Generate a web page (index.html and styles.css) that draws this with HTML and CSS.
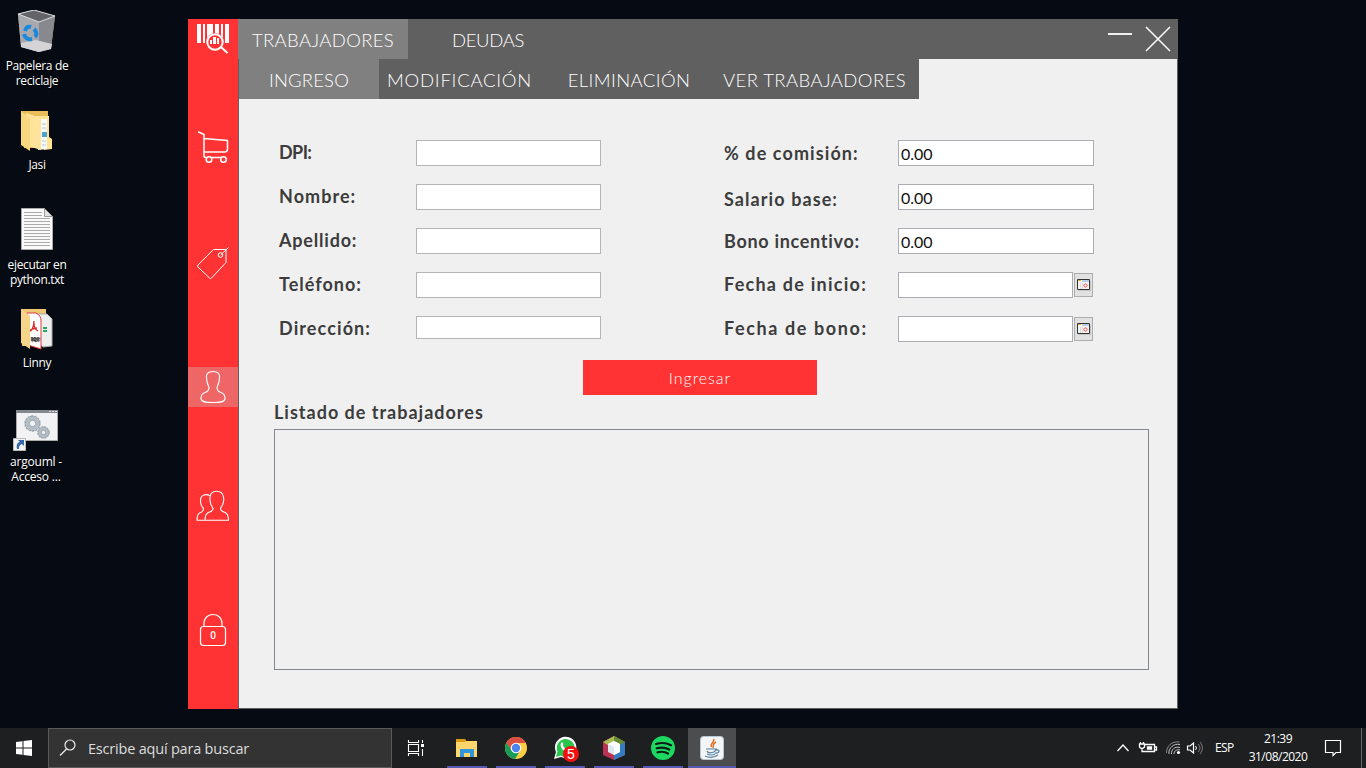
FILE: index.html
```
<!DOCTYPE html>
<html lang="es">
<head>
<meta charset="utf-8">
<title>Trabajadores</title>
<link rel="stylesheet" href="styles.css">
</head>
<body>
<div class="desktop">
<aside class="shortcuts">
  <div class="shortcut">
    <svg width="48" height="48" viewBox="0 0 48 48"><path d="M6 4 22 0 43 6 39 39 27 42 9 37Z" fill="#9a9ba1"/><path d="M6 4 27 12 27 42 9 37Z" fill="#a8a9ae"/><path d="M27 12 43 6 39 38 27 42Z" fill="#87898f"/><path d="M9 33 24 30 40 34 39 39 27 42 9 37Z" fill="#d4d4d6"/><path d="M6 4 22 0 43 6 27 12Z" fill="#626469" stroke="#dededf"/><g fill="none" stroke="#1689dc" stroke-width="4"><path d="M13 21c1-4 3-5 6-4"/><path d="M22 19c3 3 3 6 1 8"/><path d="M20 29c-4 1-7-1-8-5"/></g></svg>
    <span>Papelera de<br>reciclaje</span>
  </div>
  <div class="shortcut folder">
    <svg width="48" height="48" viewBox="0 1 48 48"><path d="M9 1h27v37H12Z" fill="#e9bd59"/><path d="M24 6h13v21l3 2v10l-8 1Z" fill="#ffe292"/><path d="M28 9h7v30l-9 1Z" fill="#f7f9fa"/><path d="M30 14h4M30 18h4M30 31h4M30 35h4" stroke="#b4c4ce"/><path d="M30 22h5v5h-5z" fill="#49a4d4"/><path d="M14 3 29 8v32l-13-4Z" fill="#ffe39a"/><path d="M9 1 18 8v33L9 35Z" fill="#f8d77e"/></svg>
    <span>Jasi</span>
  </div>
  <div class="shortcut file">
    <svg width="48" height="48" viewBox="0 0 48 48"><path d="M9.500.5h23l8 8v33h-31Z" fill="#fafafa" stroke="#aaa"/><path d="M32.500.5v8h8Z" fill="#e2e2e2" stroke="#999"/><path d="M12 4.500h18M12 7.500h18M12 10.500h26M12 13.500h26M12 16.500h26M12 19.500h26M12 22.500h26M12 25.500h26M12 28.500h26M12 31.500h26M12 34.500h26M12 37.500h26" stroke="#aaa"/></svg>
    <span>ejecutar en<br>python.txt</span>
  </div>
  <div class="shortcut linny">
    <svg width="48" height="48" viewBox="0 1 48 48"><path d="M9 1h25v37H10Z" fill="#efc876"/><path d="M25 6h10l5 5v27l-9 1-6-5Z" fill="#eee" stroke="#aaa"/><path d="M31 20h4M31 23h4" stroke="#28a765" stroke-width="2"/><path d="M15 5h9q5 2 5 8v28l-13-4Z" fill="#fff" stroke="#e53c3c"/><path d="M22 13c0 7-3 10-4 10s2-3 7-3M22 15c0 5 2 7 4 8" fill="none" stroke="#dd2b2b" stroke-width="1.300"/><text x="18.500" y="33" class="pdf">PDF</text><path d="M9 1 18 8v33l-9-6Z" fill="#f6d489"/></svg>
    <span>Linny</span>
  </div>
  <div class="shortcut argo">
    <svg width="48" height="48" viewBox="0 0 48 48"><path d="M3.500 2.500h41v30h-41Z" fill="#f2f2f4" stroke="#aaa"/><path d="M3 2h42v3H3Z" fill="#83878e"/><path d="M36 3.500h2M39 3.500h2M42 3.500h2" stroke="#ddd"/><g fill="none" stroke="#b5bdc4"><circle cx="19.500" cy="15.500" r="5" stroke-width="3.500"/><circle cx="19.500" cy="15.500" r="7.500" stroke-width="1.800" stroke-dasharray="2 1.370"/><circle cx="30.500" cy="24.500" r="3.700" stroke-width="3"/><circle cx="30.500" cy="24.500" r="5.700" stroke-width="1.500" stroke-dasharray="1.700 1.290"/></g><g fill="none" stroke="#81909c" stroke-width=".7"><circle cx="19.500" cy="15.500" r="3.200"/><circle cx="19.500" cy="15.500" r="7.300"/><circle cx="30.500" cy="24.500" r="2.200"/><circle cx="30.500" cy="24.500" r="5.500"/></g><path d="M.5 30.500h12v12H.5Z" fill="#f2f2f2" stroke="#bbb"/><path d="M4 41c-1-5 1-7 3-7l-2-2h6v6l-2-2c-3 1-3 3-3 5Z" fill="#3567ad"/></svg>
    <span>argouml -<br>Acceso ...</span>
  </div>
</aside>

<main class="window">
  <nav class="sidebar">
    <svg class="side-item" width="50" height="40" viewBox="0 0 50 40"><path d="M9 5h4v19H9zM15 5h2v19h-2zM19 5h6v19h-6zM27 5h4v19h-4zM33 5h2v19h-2zM37 5h4v19h-4z" fill="#fff"/><circle cx="27" cy="23" r="9" fill="#f33"/><path d="M22 21h2v4h-2zM25 18h3v7h-3zM29 19h2v6h-2z" fill="#fff"/><circle cx="27" cy="23" r="7.700" fill="none" stroke="#fff" stroke-width="2"/><path d="m33 28 6.500 6" stroke="#fff" stroke-width="2"/></svg>
    <svg class="side-item cart" width="50" height="40" viewBox="0 0 50 40"><path d="m10.500 4 5.500 2.500v21.500q0 1.500 2 1.500h18M16 10.500l23.500 2v8.500q0 3-3 3H16" fill="none" stroke="#fff" stroke-width="1.500" stroke-linecap="round" stroke-linejoin="round"/><circle cx="21" cy="31.500" r="2.800" fill="#f33" stroke="#fff" stroke-width="1.600"/><circle cx="35.500" cy="31.500" r="2.800" fill="#f33" stroke="#fff" stroke-width="1.600"/></svg>
    <svg class="side-item tag" width="50" height="40" viewBox="0 0 50 40"><g fill="none" stroke="#fff"><path d="M25.500 5.500h12.500v13L23.500 34q-1 1-2 0L10 23q-1-1 0-2Z"/><circle cx="32.500" cy="11" r="2.300"/><path d="m32.500 11 8-7.500"/></g></svg>
    <svg class="side-item user active" width="50" height="40" viewBox="0 0 50 40"><path d="M25 4.500c-5 0-7 2.500-6.500 6 0 4 1 7 2.500 10 0 3-1 4-4 5-3 1-4 3-4 6 0 3 3 4 12 4s12-1 12-4-1-5-4-6c-3-1-4-2-4-5 1.500-3 2.500-6 2.500-10 .5-3.500-1.500-6-6.500-6Z" fill="none" stroke="#fff" stroke-width="1.100"/></svg>
    <svg class="side-item group" width="50" height="40" viewBox="0 0 50 40"><g fill="none" stroke="#fff" stroke-width="1.100"><path d="M22 9.500c-5-2-9.500-.5-9.500 5 0 3 1 6 3 8 0 3-1 3-3 4-3 1-3.500 4-3.500 7.800H40.500c0-5-1-7-4-8-3-1-4-2-4-4 3-4 4-7 3-11-.5-4-3-6-7-6s-6 2-6.500 6c-.5 4 0 7 3 11 0 2-1 3-4 4-3 1-4 3-4 8"/></g></svg>
    <svg class="side-item lock" width="50" height="40" viewBox="0 0 50 40"><g fill="none" stroke="#fff"><path d="M16 15.500v-3c0-12 18-12 18 0v3" stroke-width="1.200"/><rect x="12.500" y="15.500" width="25" height="19" rx="3" stroke-width="1.200"/></g><text x="25" y="28" class="lock-number">0</text></svg>
  </nav>
  <section class="content">
    <header class="titlebar">
      <div class="tab main-tab selected"><span class="t1">TRABAJADORES</span></div>
      <div class="tab deudas"><span class="t2">DEUDAS</span></div>
      <svg class="controls" width="80" height="40" viewBox="0 0 80 40"><path d="M10 15h24" stroke="#f0f0f0" stroke-width="2"/><path d="m48 8 24 24M72 8 48 32" stroke="#fff" stroke-width="1.500"/></svg>
    </header>
    <div class="panel">
      <nav class="subtabs">
        <div class="tab ingreso selected"><span class="t3">INGRESO</span></div>
        <div class="tab modificacion"><span class="t4">MODIFICACIÓN</span></div>
        <div class="tab eliminacion"><span class="t5">ELIMINACIÓN</span></div>
        <div class="tab ver"><span class="t6">VER TRABAJADORES</span></div>
      </nav>
      <form class="form">
        <div class="column left">
          <label><span class="l1">DPI:</span><input></label>
          <label><span class="l2">Nombre:</span><input></label>
          <label><span class="l3">Apellido:</span><input></label>
          <label><span class="l4">Teléfono:</span><input></label>
          <label><span class="l5">Dirección:</span><input class="short"></label>
        </div>
        <div class="column right">
          <label><span class="r1">% de comisión:</span><input value="0.00"></label>
          <label><span class="r2">Salario base:</span><input value="0.00"></label>
          <label><span class="r3">Bono incentivo:</span><input value="0.00"></label>
          <label><span class="r4">Fecha de inicio:</span><input class="date"><i class="calendar"><svg width="15" height="14" viewBox="0 0 15 14"><path d="M2 3h13v10H2z" fill="#c5c5c5"/><path d="M1.500 1.500h12v10h-12z" fill="#f4f4f4" stroke="#333"/><path d="M2 2h3v1H2z" fill="#eda83b"/><path d="M6 2h7v2H6z" fill="#b7cfee"/><path d="M4.500 5v6M6.500 5v6" stroke="#ddd"/><circle cx="9.500" cy="7.500" r="1.600" fill="none" stroke="#e55"/></svg></i></label>
          <label><span class="r5">Fecha de bono:</span><input class="date"><i class="calendar"><svg width="15" height="14" viewBox="0 0 15 14"><path d="M2 3h13v10H2z" fill="#c5c5c5"/><path d="M1.500 1.500h12v10h-12z" fill="#f4f4f4" stroke="#333"/><path d="M2 2h3v1H2z" fill="#eda83b"/><path d="M6 2h7v2H6z" fill="#b7cfee"/><path d="M4.500 5v6M6.500 5v6" stroke="#ddd"/><circle cx="9.500" cy="7.500" r="1.600" fill="none" stroke="#e55"/></svg></i></label>
        </div>
      </form>
      <button class="submit">Ingresar</button>
      <h2 class="list-title">Listado de trabajadores</h2>
      <div class="list"></div>
    </div>
  </section>
</main>
</div>

<footer class="taskbar">
  <div class="start"><svg width="16" height="16" viewBox="0 0 16 16"><path d="m0 2 6.500-.8v6.300H0ZM7.500 1 16 0v7.500H7.500ZM0 8.500h6.500v6.300L0 14ZM7.500 8.500H16V16l-8.500-1Z" fill="#fff"/></svg></div>
  <div class="search"><svg width="18" height="18" viewBox="0 0 18 18"><circle cx="11" cy="6" r="5" fill="none" stroke="#eee" stroke-width="1.200"/><path d="m7.500 10-6.500 6.500" stroke="#eee" stroke-width="1.300"/></svg><span>Escribe aquí para buscar</span></div>
  <div class="taskview"><svg width="18" height="16" viewBox="0 0 18 16"><path d="M1.500 0v2.500h10V0M1.500 16v-2.500h10V16M1.500 4.500h10v7h-10ZM15.500 0v3M15.500 9v7" fill="none" stroke="#fff" stroke-width="1.100"/><path d="M14 4h3v3h-3z" fill="#fff"/></svg></div>
  <div class="apps">
    <div class="app"><svg width="28" height="28" viewBox="0 0 28 28"><path d="M3 5h9l1 2h11v16H3Z" fill="#ffd66c"/><path d="M3 5h9l1 2-1 1H3Z" fill="#dc9b13"/><path d="M7 15h14v8h-4v-4h-6v4H7Z" fill="#3296dc"/></svg></div>
    <div class="app"><svg width="28" height="28" viewBox="0 0 28 28"><circle cx="14" cy="14" r="11" fill="#ffcd42"/><path d="M4.470 8.500A11 11 0 0 0 13 25l5.300-8.500-4.300 2-4-2Z" fill="#199c58"/><path d="M14 9h9.800A11 11 0 0 0 4.470 8.500L9.500 16.500Z" fill="#dc4e41"/><circle cx="14" cy="14" r="5.300" fill="#fff"/><circle cx="14" cy="14" r="4.200" fill="#4a85ee"/></svg></div>
    <div class="app whatsapp"><svg width="28" height="28" viewBox="0 0 28 28"><path d="m3 25 2-7A10.700 10.700 0 1 1 10 23Z" fill="#fff"/><path d="m5 23 1.500-5.500A8.900 8.900 0 1 1 10 21.500Z" fill="#27c44e"/><path d="M10 9c1-2 3 1 2 2.500 1 2 2 3 4 4 2-2 4 0 2 2-4 2-10-4-8-8.500Z" fill="#fff"/></svg><b class="badge">5</b></div>
    <div class="app"><svg width="28" height="28" viewBox="0 0 28 28"><path d="m14 2 11 6v13l-11 5-11-5V8Z" fill="#ba3154"/><path d="m14 2 11 6-11 7L3 8Z" fill="#a9bd54"/><path d="m14 2 11 6v3l-11 4Z" fill="#668b35"/><path d="m25 8v13l-11 5V15Z" fill="#347bc1"/><path d="m8 10 6-3 6 3v8l-6 3-6-3Z" fill="#dce8ed"/><path d="m8 10 6-3 6 3-6 3Z" fill="#fff"/><path d="m20 10v8l-6 3v-8Z" fill="#f8fbfb"/></svg></div>
    <div class="app"><svg width="28" height="28" viewBox="0 0 28 28"><circle cx="14" cy="14" r="12" fill="#1ed760"/><path d="M7 10q8-2.500 15 1.200M7.700 14.300q7-2 12.600 1.200M8.500 18.300q6-1.500 10.500 1.200" fill="none" stroke="#101b16" stroke-width="2.200" stroke-linecap="round"/></svg></div>
    <div class="app current"><svg width="28" height="28" viewBox="0 0 28 28"><rect x="2.500" y="2.500" width="23" height="23" rx="3" fill="#f3f5f7" stroke="#b9c8d1"/><path d="M15.500 5c2 3-4 4-2 8M18 8c-4 2-2 3-3 6" fill="none" stroke="#e76f20" stroke-width="1.500"/><path d="M8 15h11M9 17q1 3 7 1l2-2c5-1 3 4-1 3M9 20q5 2 8 0M7 22q7 3 13-1" fill="none" stroke="#537e9e" stroke-width="1.200"/></svg></div>
  </div>
  <div class="tray">
    <svg class="tray-icons" width="90" height="20" viewBox="0 0 90 20"><g fill="none" stroke="#fff" stroke-width="1.300"><path d="m3.500 13 5.500-6 5.500 6"/><path d="M31 6.500h9.500v7H31M41 9h1.500v3H41M26.500 4v2M29.500 4v2M25.500 6h5v3q-2.500 3-5 0ZM28 11v2.500h3"/><path d="M33.500 9h4v2h-4Z" fill="#fff"/></g><g fill="none" stroke="#c6c6c6"><path d="M55 16c-1-6 5-11 11-9.500M57.500 16c-.5-4 3-8 8.500-6.500M60 16c0-3 2.500-5 6-4"/><path d="M52.500 15c0-7 5-12 13-11" stroke="#888"/></g><circle cx="64.500" cy="14.500" r="1.600" fill="#fff"/><path d="M73.500 8h2.500l3.500-3v10L76 12h-2.500Z" fill="none" stroke="#fff" stroke-width="1.200"/><path d="M81.500 8q2 2 0 4" fill="none" stroke="#fff"/><path d="M84 6q4 4 0 8M86 4q5 6 0 12" fill="none" stroke="#777"/></svg>
    <span class="language">ESP</span>
    <div class="clock"><span>21:39</span><span>31/08/2020</span></div>
    <svg class="notice" width="18" height="18" viewBox="0 0 18 18"><path d="M1.500 1.500h15v12H12l-3 3v-3H1.500Z" fill="none" stroke="#fff" stroke-width="1.200"/></svg>
    <div class="show-desktop"></div>
  </div>
</footer>
</body>
</html>
```
FILE: styles.css
```
* { box-sizing: border-box; }
body { margin: 0; width: 1366px; height: 768px; overflow: hidden; display: flex; flex-direction: column; background: #060b13; font-family: "Open Sans", sans-serif; }
svg { display: block; flex: none; }
.desktop { position: relative; height: 728px; }
.shortcuts { width: 74px; padding-top: 10px; }
.shortcut { height: 101px; display: flex; flex-direction: column; align-items: center; text-align: center; color: #fff; font: 12px/15px "Open Sans", sans-serif; letter-spacing: -.35px; white-space: nowrap; text-shadow: 1px 1px 1px #000; }
.shortcut svg { margin-right: 2px; }
.folder { height: 97px; }
.folder svg, .linny svg { margin-bottom: -2px; }
.file { height: 101px; }
.file svg { margin-bottom: 1px; }
.linny { height: 99px; }
.argo { padding-right: 2px; letter-spacing: -.2px; }
.argo svg { margin: 0 0 -2px 2px; }
.window { position: absolute; left: 188px; top: 19px; width: 990px; height: 690px; display: flex; }
.sidebar { width: 50px; background: #f33; }
.cart { margin-top: 69px; }
.tag { margin-top: 76px; }
.user { margin-top: 83px; }
.group { margin-top: 79px; }
.lock { margin-top: 85px; }
.active { background: #ef6666; }
.lock-number { fill: #fff; font: 600 10px "Open Sans", sans-serif; text-anchor: middle; }
.pdf { font: 700 5px "Open Sans", sans-serif; fill: #333; }
.content { width: 940px; display: flex; flex-direction: column; background: #606060; }
.titlebar { height: 40px; display: flex; }
.tab { height: 40px; display: flex; align-items: center; justify-content: center; white-space: nowrap; color: #fff; font: 300 18.500px/24px Lato, sans-serif; padding-top: 1px; }
.t1 { letter-spacing: .35px; }
.t2 { letter-spacing: -.3px; }
.t3 { letter-spacing: .15px; }
.t4 { letter-spacing: .75px; }
.t5 { letter-spacing: .4px; }
.t6 { letter-spacing: .4px; }
.selected { background: #808080; }
.main-tab { width: 170px; }
.deudas { width: 160px; }
.controls { margin-left: auto; }
.panel { flex: 1; margin: 0 1px 1px; background: #f0f0f0; }
.subtabs { width: 680px; height: 40px; display: flex; background: #606060; }
.ingreso { width: 140px; }
.modificacion { width: 161px; }
.eliminacion { width: 178px; }
.ver { width: 201px; padding-right: 8px; }
.form { display: flex; padding: 41px 0 0 40px; height: 261px; }
.column { display: flex; flex-direction: column; gap: 18px; }
.left { width: 445px; }
.column label { height: 26px; display: flex; align-items: center; font: 700 18px/26px Lato, sans-serif; color: #3c3c3c; white-space: nowrap; }
.column label span { position: relative; top: -1px; }
.left label span { width: 137px; }
.right label span { width: 174px; padding-top: 2px; }
.right label .r2 { padding-top: 5px; }
.right label .r4, .right label .r5 { padding-top: 0; }
.l1 { letter-spacing: -.6px; }
.l2 { letter-spacing: 1.050px; }
.l3 { letter-spacing: .8px; }
.l4 { letter-spacing: 1px; }
.l5 { letter-spacing: 1.100px; }
.r1 { letter-spacing: 1.100px; }
.r2 { letter-spacing: 1.080px; }
.r3 { letter-spacing: .7px; }
.r4 { letter-spacing: 1.250px; }
.r5 { letter-spacing: 1.600px; }
input { width: 185px; height: 26px; border: 1px solid #b5b5b8; border-radius: 0; padding: 0 2px; background: #fff; color: #111; font: 400 16px/22px Lato, sans-serif; outline: 0; }
.short { height: 23px; align-self: flex-start; }
.right input { width: 196px; border-color: #abadb3; }
.right .date { width: 175px; }
.calendar { display: flex; align-items: center; justify-content: center; width: 19px; height: 24px; margin-left: 1px; background: #e1e1e1; border: 1px solid #adadad; }
.submit { display: block; width: 234px; height: 35px; margin-left: 344px; padding: 0; border: 0; background: #f33; color: #fff; font: 300 16px/22px Lato, sans-serif; letter-spacing: .95px; }
.list-title { height: 34px; margin: 0 0 0 35px; padding-top: 5px; font: 700 18px/24px Lato, sans-serif; letter-spacing: 1px; color: #3c3c3c; }
.list { width: 875px; height: 241px; margin-left: 35px; border: 1px solid #828790; }
.taskbar { height: 40px; display: flex; background: #1d1f21; color: #fff; }
.start { width: 48px; display: flex; align-items: center; justify-content: center; }
.search { width: 344px; display: flex; align-items: center; gap: 11px; padding-left: 10px; background: #333; border: 1px solid #5a5a5a; color: #ddd; font: 14.500px/20px "Open Sans", sans-serif; letter-spacing: -.2px; }
.search span { padding-top: 1px; }
.taskview { width: 50px; padding-right: 2px; display: flex; align-items: center; justify-content: center; }
.apps { display: flex; gap: 9px; padding-left: 5px; }
.app { width: 40px; display: flex; align-items: center; justify-content: center; border-bottom: 2px solid #555bb5; position: relative; padding-top: 2px; }
.current { width: 48px; margin-left: -4px; background: #4b4d4f; }
.badge { position: absolute; left: 18px; top: 18px; width: 16px; height: 16px; border-radius: 50%; background: #f01010; text-align: center; font: 14px/16px "Liberation Sans", sans-serif; }
.tray { margin-left: auto; display: flex; align-items: center; font: 12px/18px "Open Sans", sans-serif; }
.tray-icons { margin-right: 11px; }
.language { width: 25px; font-size: 12px; letter-spacing: -.6px; }
.clock { width: 76px; display: flex; flex-direction: column; align-items: center; letter-spacing: -.5px; }
.notice { margin-left: 8px; }
.show-desktop { width: 5px; height: 40px; margin-left: 19px; border-left: 1px solid #66686a; }
```
